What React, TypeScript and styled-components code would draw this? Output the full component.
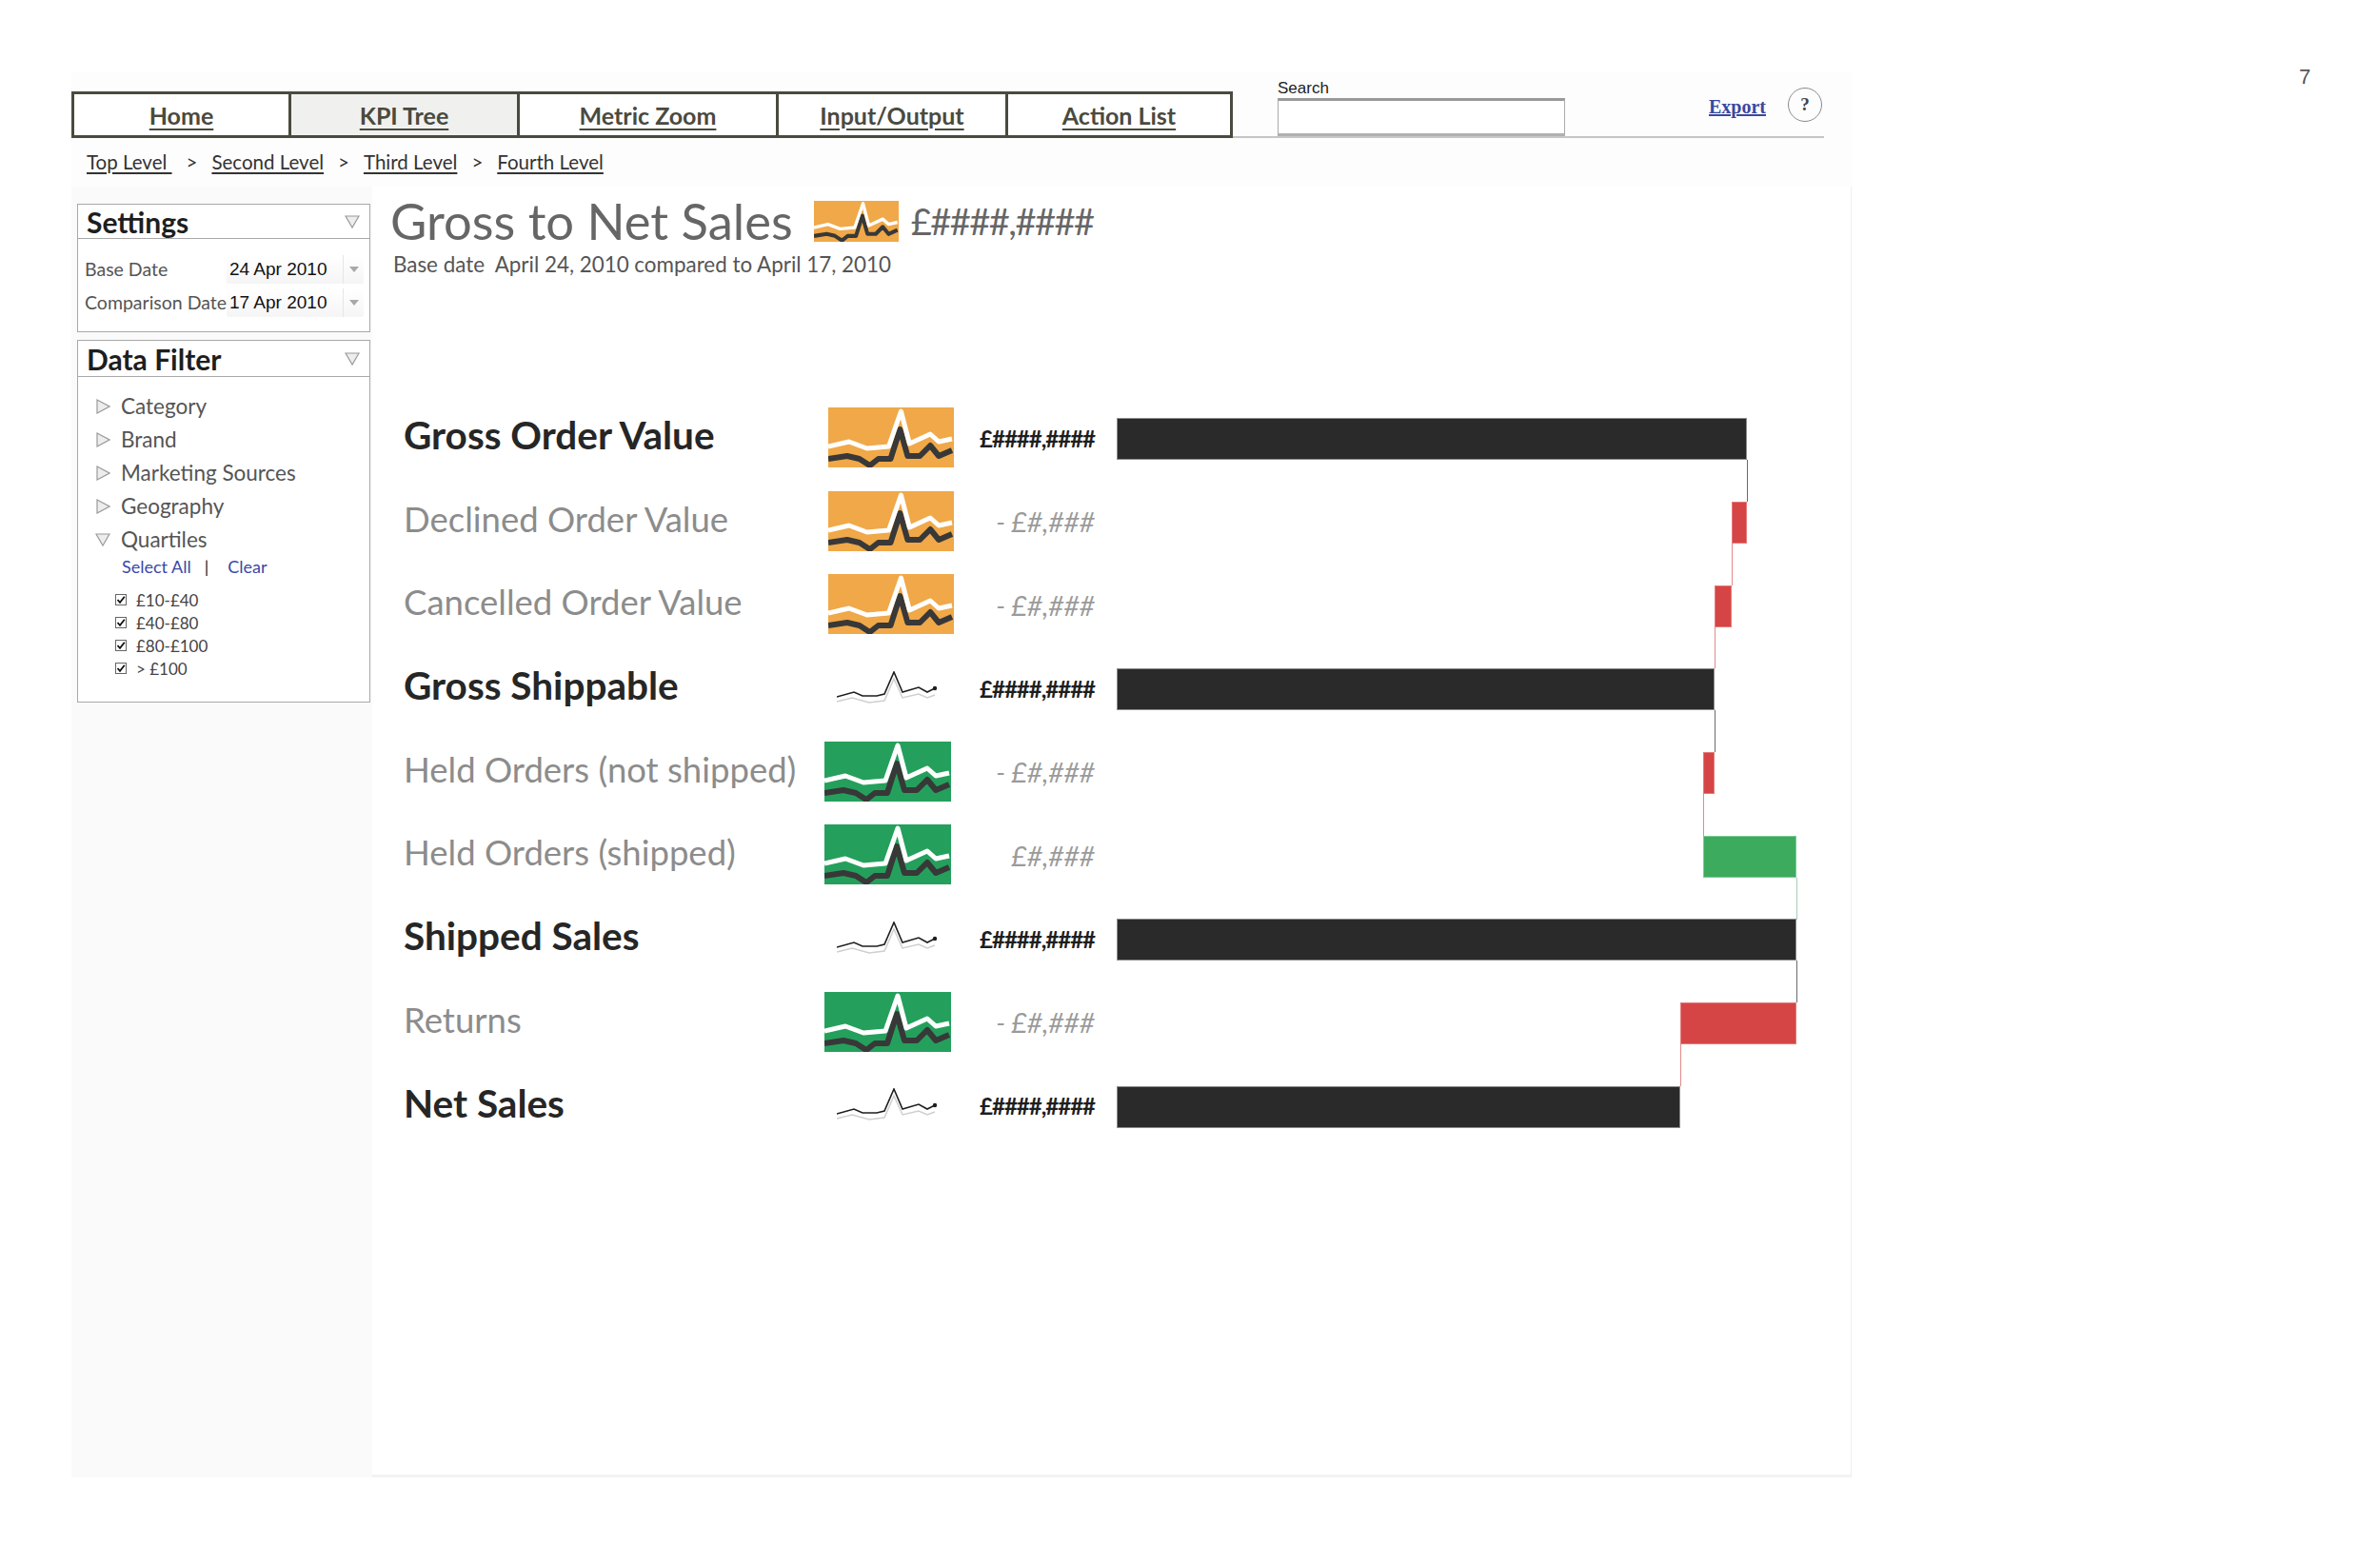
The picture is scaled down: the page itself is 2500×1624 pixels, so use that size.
import React from 'react';
import styled, { createGlobalStyle } from 'styled-components';

const GlobalStyle = createGlobalStyle`
	html, body {
		margin: 0;
		padding: 0;
		background: #ffffff;
	}
	body {
		font-family: Lato, "Noto Sans", sans-serif;
		color: #333;
	}
	* {
		box-sizing: border-box;
	}
`;

type Spark = 'orange' | 'green' | 'line';
type Kind = 'total' | 'delta';

interface Metric {
	label: string;
	kind: Kind;
	spark: Spark;
	value: string;
	amount: number;
}

const metrics: Metric[] = [
	{ label: 'Gross Order Value', kind: 'total', spark: 'orange', value: '£####,####', amount: 662 },
	{ label: 'Declined Order Value', kind: 'delta', spark: 'orange', value: '- £#,###', amount: -16 },
	{ label: 'Cancelled Order Value', kind: 'delta', spark: 'orange', value: '- £#,###', amount: -18 },
	{ label: 'Gross Shippable', kind: 'total', spark: 'line', value: '£####,####', amount: 628 },
	{ label: 'Held Orders (not shipped)', kind: 'delta', spark: 'green', value: '- £#,###', amount: -12 },
	{ label: 'Held Orders (shipped)', kind: 'delta', spark: 'green', value: '£#,###', amount: 98 },
	{ label: 'Shipped Sales', kind: 'total', spark: 'line', value: '£####,####', amount: 714 },
	{ label: 'Returns', kind: 'delta', spark: 'green', value: '- £#,###', amount: -122 },
	{ label: 'Net Sales', kind: 'total', spark: 'line', value: '£####,####', amount: 592 },
];

const tabs = [
	{ name: 'Home', width: 225 },
	{ name: 'KPI Tree', width: 240, active: true },
	{ name: 'Metric Zoom', width: 272 },
	{ name: 'Input/Output', width: 241 },
	{ name: 'Action List', width: 236 },
];

const filters = ['Category', 'Brand', 'Marketing Sources', 'Geography'];
const quartiles = ['£10-£40', '£40-£80', '£80-£100', '> £100'];

const Page = styled.div`
	display: flex;
	align-items: flex-start;
	width: 2500px;
	min-height: 1624px;
	padding: 70px 0 0 75px;
`;

const Frame = styled.div`
	margin-top: 5px;
	width: 1870px;
	height: 1477px;
	display: flex;
	flex-direction: column;
	background: #fdfdfd;
`;

const PageNumber = styled.div`
	margin-left: 470px;
	font-family: "Liberation Sans", sans-serif;
	font-size: 22px;
	line-height: 1;
	color: #555;
`;

const Header = styled.div`
	display: flex;
	align-items: flex-end;
	height: 62px;
	margin-top: 8px;
`;

const Nav = styled.nav`
	display: flex;
	height: 49px;
	border: 3px solid #4a4a3e;
`;

const Tab = styled.a<{ $width: number; $active?: boolean }>`
	display: flex;
	align-items: center;
	justify-content: center;
	width: ${p => p.$width}px;
	border-left: 3px solid #4a4a3e;
	background: ${p => (p.$active ? '#f0f1ef' : '#ffffff')};
	font-size: 25px;
	font-weight: 700;
	color: #4a4a3e;
	text-decoration: underline;
	text-underline-offset: 4px;
	text-decoration-thickness: 2px;

	&:first-child {
		border-left: none;
	}
`;

const Tools = styled.div`
	display: flex;
	align-items: flex-end;
	width: 621px;
	height: 62px;
	border-bottom: 2px solid #c6c6c6;
`;

const SearchBlock = styled.label`
	display: flex;
	flex-direction: column;
	margin-left: 47px;
	font-family: "Liberation Sans", sans-serif;
	font-size: 17px;
	line-height: 20px;
	color: #222;
`;

const SearchInput = styled.input`
	width: 302px;
	height: 40px;
	border: 1px solid #aaa;
	border-top: 3px solid #999;
	border-bottom: 3px solid #b0b0b0;
	background: #fff;
`;

const ExportLink = styled.a`
	align-self: center;
	margin: 0 0 2px 151px;
	font-family: "Liberation Serif", serif;
	font-size: 20px;
	font-weight: 700;
	color: #3a48a0;
	text-decoration: underline;
`;

const HelpButton = styled.div`
	align-self: center;
	display: flex;
	align-items: center;
	justify-content: center;
	width: 36px;
	height: 36px;
	margin: 0 0 6px 23px;
	border: 1px solid #8a8a8a;
	border-radius: 50%;
	font-family: "Liberation Serif", serif;
	font-size: 19px;
	font-weight: 700;
	color: #444;
`;

const Breadcrumb = styled.div`
	display: flex;
	align-items: center;
	gap: 15px;
	height: 28px;
	margin-top: 11px;
	padding-left: 16px;
	font-size: 20.5px;
	color: #333;
`;

const Crumb = styled.a`
	color: #333;
	text-decoration: underline;
	text-underline-offset: 3px;
`;

const Body = styled.div`
	display: flex;
	flex: 1;
	margin-top: 12px;
`;

const Sidebar = styled.aside`
	width: 316px;
	padding: 18px 2px 0 6px;
	background: #fafafa;
`;

const Panel = styled.section<{ $height: number; $gap?: number }>`
	height: ${p => p.$height}px;
	margin-top: ${p => p.$gap ?? 0}px;
	border: 1px solid #a8a8a8;
	background: #fff;
`;

const PanelHeader = styled.div<{ $height: number }>`
	display: flex;
	align-items: center;
	justify-content: space-between;
	height: ${p => p.$height}px;
	padding: 0 10px 0 9px;
	border-bottom: 1px solid #a8a8a8;
	font-size: 30px;
	font-weight: 700;
	color: #1e1e1e;
`;

const SettingsBody = styled.div`
	padding: 14px 6px 0 7px;
`;

const SettingRow = styled.div`
	display: flex;
	align-items: center;
	height: 35px;
`;

const SettingLabel = styled.span`
	width: 150px;
	font-size: 19.5px;
	color: #555;
	white-space: nowrap;
	overflow: hidden;
`;

const DateField = styled.div`
	display: flex;
	align-items: center;
	width: 145px;
	height: 30px;
	background: linear-gradient(#ffffff, #f5f5f5);
	border-radius: 2px;
	font-family: "Liberation Sans", sans-serif;
	font-size: 19px;
	color: #111;
`;

const DateText = styled.span`
	flex: 1;
	padding-left: 3px;
	white-space: nowrap;
`;

const DateArrow = styled.span`
	display: flex;
	align-items: center;
	justify-content: center;
	width: 22px;
	height: 100%;
	border-left: 1px solid #e6e6e6;
`;

const FilterList = styled.ul`
	list-style: none;
	margin: 0;
	padding: 13px 0 0 18px;
`;

const FilterItem = styled.li`
	display: flex;
	align-items: center;
	gap: 11px;
	height: 35px;
	font-size: 22.5px;
	color: #555;
`;

const QuickLinks = styled.div`
	display: flex;
	align-items: center;
	height: 22px;
	padding-left: 46px;
	font-size: 18px;
	color: #3a48a8;
`;

const Pipe = styled.span`
	margin: 0 20px 0 14px;
	color: #222;
`;

const CheckList = styled.ul`
	list-style: none;
	margin: 12px 0 0 0;
	padding: 0 0 0 39px;
`;

const CheckItem = styled.li`
	display: flex;
	align-items: center;
	gap: 10px;
	height: 24px;
	font-size: 17px;
	color: #444;
`;

const Main = styled.main`
	flex: 1;
	background: #fff;
	border-right: 1px solid #efefef;
	border-bottom: 3px solid #f3f3f3;
`;

const TitleRow = styled.div`
	display: flex;
	align-items: center;
	gap: 22px;
	margin: 10px 0 0 19px;
`;

const Title = styled.h1`
	margin: 0;
	font-size: 52.5px;
	font-weight: 400;
	line-height: 1;
	color: #666;
`;

const TitleValue = styled.span`
	margin-left: -9px;
	font-size: 38px;
	letter-spacing: -1.5px;
	color: #666;
`;

const Subtitle = styled.div`
	margin: 5px 0 0 22px;
	font-size: 22.4px;
	color: #555;
	white-space: pre;
`;

const Rows = styled.div`
	margin-top: 127px;
	padding-left: 33px;
`;

const Row = styled.div`
	display: grid;
	grid-template-columns: 438px 140px 148px 1fr;
	align-items: center;
	height: 87.7px;
`;

const Label = styled.div<{ $strong: boolean }>`
	padding-bottom: 9px;
	font-size: ${p => (p.$strong ? 40.5 : 36.5)}px;
	font-weight: ${p => (p.$strong ? 700 : 400)};
	color: ${p => (p.$strong ? '#262626' : '#8c8c8c')};
	white-space: nowrap;
`;

const SparkCell = styled.div<{ $variant: Spark }>`
	display: flex;
	justify-content: center;
	padding-bottom: 4px;
	padding-left: ${p => (p.$variant === 'orange' ? 8 : 0)}px;
`;

const Value = styled.div<{ $strong: boolean }>`
	padding-bottom: 2px;
	text-align: right;
	font-size: ${p => (p.$strong ? 24 : 28)}px;
	font-weight: ${p => (p.$strong ? 700 : 400)};
	font-style: ${p => (p.$strong ? 'normal' : 'italic')};
	letter-spacing: ${p => (p.$strong ? -1 : 0)}px;
	color: ${p => (p.$strong ? '#1e1e1e' : '#9a9a9a')};
	white-space: pre;
`;

const Track = styled.div`
	position: relative;
	display: flex;
	align-items: center;
	height: 87.7px;
	margin-left: 23px;
`;

const barColors = {
	total: { fill: '#2a2a2a', edge: '#8c8c8c', link: '#6a6a6a' },
	down: { fill: '#d64545', edge: '#e47a7a', link: '#e58a8a' },
	up: { fill: '#3dab5e', edge: '#7ccb92', link: '#a9cbb8' },
};

type Tone = keyof typeof barColors;

const Bar = styled.div<{ $tone: Tone }>`
	height: 44px;
	background: ${p => barColors[p.$tone].fill};
	box-shadow: inset 0 0 0 1px ${p => barColors[p.$tone].edge};
`;

const Connector = styled.div<{ $tone: Tone }>`
	position: absolute;
	top: 65.8px;
	width: 1px;
	height: 43.8px;
	background: ${p => barColors[p.$tone].link};
`;

const Triangle: React.FC<{ dir: 'right' | 'down'; size?: number }> = ({ dir, size = 16 }) => (
	<svg width={size} height={size} viewBox="0 0 16 16">
		{dir === 'right'
			? <polygon points="2,1 15,8 2,15" fill="#ededed" stroke="#9a9a9a" strokeWidth="1.2" />
			: <polygon points="1,2 15,2 8,14" fill="#ededed" stroke="#9a9a9a" strokeWidth="1.2" />}
	</svg>
);

const CheckBox: React.FC = () => (
	<svg width="12" height="12" viewBox="0 0 12 12">
		<rect x="0.5" y="0.5" width="11" height="11" fill="#fff" stroke="#666" />
		<polyline points="2.5,6 5,8.8 9.8,2.8" fill="none" stroke="#111" strokeWidth="1.8" />
	</svg>
);

const WHITE_LINE = '0,41 22,36 41,43 64,41 77,4 86,38 108,28 117,36 131,33';
const DARK_LINE = '0,54 20,51 33,54 44,61 53,54 66,54 76,23 84,51 97,51 108,40 117,51 131,45';

const BoxSpark: React.FC<{ color: string; width?: number; height?: number }> = ({ color, width = 133, height = 63 }) => (
	<svg width={width} height={height} viewBox="0 0 133 63" preserveAspectRatio="none">
		<rect width="133" height="63" fill={color} />
		<polyline points={DARK_LINE} fill="none" stroke="#383838" strokeWidth="6" strokeLinejoin="round" />
		<polyline points={WHITE_LINE} fill="none" stroke="#ffffff" strokeWidth="5" strokeLinejoin="round" />
	</svg>
);

const LineSpark: React.FC = () => (
	<svg width="106" height="35" viewBox="0 0 106 35">
		<polyline points="0,32 16,28 34,33 50,31 60,8 69,28 86,24 95,28 103,25" fill="none" stroke="#cfcfcf" strokeWidth="1.5" />
		<polyline points="0,27 18,22 27,26 42,26 50,24 60,1 69,22 86,17 95,22 103,18" fill="none" stroke="#1e1e1e" strokeWidth="1.6" />
		<circle cx="103" cy="18" r="2.2" fill="#1e1e1e" />
	</svg>
);

const Sparkline: React.FC<{ variant: Spark }> = ({ variant }) => {
	if (variant === 'line') return <LineSpark />;
	return <BoxSpark color={variant === 'orange' ? '#f0a848' : '#24a05c'} />;
};

const DownCaret: React.FC = () => (
	<svg width="10" height="6" viewBox="0 0 10 6">
		<polygon points="0,0 10,0 5,6" fill="#a8a8a8" />
	</svg>
);

interface Placed {
	metric: Metric;
	left: number;
	width: number;
	tone: Tone;
	end: number;
}

function placeBars(list: Metric[]): Placed[] {
	let running = 0;
	return list.map(metric => {
		if (metric.kind === 'total') {
			running = metric.amount;
			return { metric, left: 0, width: metric.amount, tone: 'total' as Tone, end: running };
		}
		const start = running;
		running += metric.amount;
		return {
			metric,
			left: Math.min(start, running),
			width: Math.abs(metric.amount),
			tone: (metric.amount < 0 ? 'down' : 'up') as Tone,
			end: running,
		};
	});
}

const App: React.FC = () => {
	const placed = placeBars(metrics);

	return (
		<>
			<GlobalStyle />
			<Page>
				<Frame>
					<Header>
						<Nav>
							{tabs.map(t => (
								<Tab key={t.name} $width={t.width} $active={t.active}>{t.name}</Tab>
							))}
						</Nav>
						<Tools>
							<SearchBlock>
								Search
								<SearchInput type="text" />
							</SearchBlock>
							<ExportLink>Export</ExportLink>
							<HelpButton>?</HelpButton>
						</Tools>
					</Header>

					<Breadcrumb>
						<Crumb>Top Level&nbsp;</Crumb>
						<span>&gt;</span>
						<Crumb>Second Level</Crumb>
						<span>&gt;</span>
						<Crumb>Third Level</Crumb>
						<span>&gt;</span>
						<Crumb>Fourth Level</Crumb>
					</Breadcrumb>

					<Body>
						<Sidebar>
							<Panel $height={135}>
								<PanelHeader $height={36}>
									Settings
									<Triangle dir="down" />
								</PanelHeader>
								<SettingsBody>
									<SettingRow>
										<SettingLabel>Base Date</SettingLabel>
										<DateField>
											<DateText>24 Apr 2010</DateText>
											<DateArrow><DownCaret /></DateArrow>
										</DateField>
									</SettingRow>
									<SettingRow>
										<SettingLabel>Comparison Date</SettingLabel>
										<DateField>
											<DateText>17 Apr 2010</DateText>
											<DateArrow><DownCaret /></DateArrow>
										</DateField>
									</SettingRow>
								</SettingsBody>
							</Panel>

							<Panel $height={381} $gap={8}>
								<PanelHeader $height={38}>
									Data Filter
									<Triangle dir="down" />
								</PanelHeader>
								<FilterList>
									{filters.map(f => (
										<FilterItem key={f}>
											<Triangle dir="right" />
											{f}
										</FilterItem>
									))}
									<FilterItem>
										<Triangle dir="down" />
										Quartiles
									</FilterItem>
								</FilterList>
								<QuickLinks>
									<span>Select All</span>
									<Pipe>|</Pipe>
									<span>Clear</span>
								</QuickLinks>
								<CheckList>
									{quartiles.map(q => (
										<CheckItem key={q}>
											<CheckBox />
											{q}
										</CheckItem>
									))}
								</CheckList>
							</Panel>
						</Sidebar>

						<Main>
							<TitleRow>
								<Title>Gross to Net Sales</Title>
								<BoxSpark color="#f0a848" width={89} height={43} />
								<TitleValue>£####,####</TitleValue>
							</TitleRow>
							<Subtitle>Base date  April 24, 2010 compared to April 17, 2010</Subtitle>

							<Rows>
								{placed.map((p, i) => {
									const strong = p.metric.kind === 'total';
									const last = i === placed.length - 1;
									return (
										<Row key={p.metric.label}>
											<Label $strong={strong}>{p.metric.label}</Label>
											<SparkCell $variant={p.metric.spark}>
												<Sparkline variant={p.metric.spark} />
											</SparkCell>
											<Value $strong={strong}>{p.metric.value}</Value>
											<Track>
												<Bar
													$tone={p.tone}
													style={{ marginLeft: p.left, width: p.width }}
												/>
												{!last && <Connector $tone={p.tone} style={{ left: p.end }} />}
											</Track>
										</Row>
									);
								})}
							</Rows>
						</Main>
					</Body>
				</Frame>
				<PageNumber>7</PageNumber>
			</Page>
		</>
	);
};

export default App;
